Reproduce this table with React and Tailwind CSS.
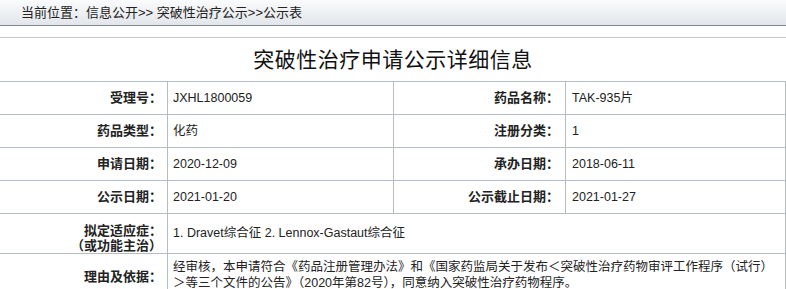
const rows = [
  ['受理号：', 'JXHL1800059', '药品名称：', 'TAK-935片'],
  ['药品类型：', '化药', '注册分类：', '1'],
  ['申请日期：', '2020-12-09', '承办日期：', '2018-06-11'],
  ['公示日期：', '2021-01-20', '公示截止日期：', '2021-01-27'],
];

const font = { fontFamily: '"Liberation Sans", "Noto Sans CJK SC", sans-serif' };

function Label({ children, className = '' }) {
  return (
    <div className={`flex items-center justify-end border-b border-r border-[#b5bcc3] font-bold text-[13px] text-[#222] ${className}`}>
      {children}
    </div>
  );
}

function Value({ children, className = '' }) {
  return (
    <div className={`flex items-center border-b border-r border-[#b5bcc3] text-[12.5px] text-[#222] ${className}`}>
      {children}
    </div>
  );
}

export default function App() {
  return (
    <div className="w-[786px] h-[289px] overflow-hidden bg-white" style={font}>
      <div className="h-[26px] bg-gradient-to-b from-[#fafbfc] to-[#e2e6ea] border-b border-[#7f878e] flex items-center pl-[21px] text-[13px] text-[#222]">
        当前位置：信息公开&gt;&gt; 突破性治疗公示&gt;&gt;公示表
      </div>
      <div className="h-[11px]" />
      <div className="border-t border-[#c3c8ce] h-[44px] flex items-center justify-center text-[21px] text-[#111] tracking-[0.5px]">
        突破性治疗申请公示详细信息
      </div>
      <div className="grid grid-cols-[168px_226px_172px_1fr] border-t border-[#b5bcc3]">
        {rows.map((r, i) => (
          <div key={i} className="contents">
            <Label className="h-[33px] pr-[5px]">{r[0]}</Label>
            <Value className="h-[33px] pl-[5px]">{r[1]}</Value>
            <Label className="h-[33px] pr-[6px]">{r[2]}</Label>
            <Value className="h-[33px] pl-[6px]">{r[3]}</Value>
          </div>
        ))}
        <Label className="h-[40px] flex-col items-end justify-center leading-[15px] pr-[5px]">
          <span>拟定适应症：</span>
          <span>（或功能主治）</span>
        </Label>
        <Value className="h-[40px] col-span-3 pl-[5px]">1. Dravet综合征 2. Lennox-Gastaut综合征</Value>
        <Label className="h-[60px] items-start pt-[13px] pr-[5px]">理由及依据：</Label>
        <Value className="h-[60px] col-span-3 items-start pt-[5px] pl-[5px] leading-[16px] whitespace-nowrap">
          <span>
            经审核，本申请符合《药品注册管理办法》和《国家药监局关于发布＜突破性治疗药物审评工作程序（试行）
            <br />
            ＞等三个文件的公告》（2020年第82号），同意纳入突破性治疗药物程序。
          </span>
        </Value>
      </div>
    </div>
  );
}
